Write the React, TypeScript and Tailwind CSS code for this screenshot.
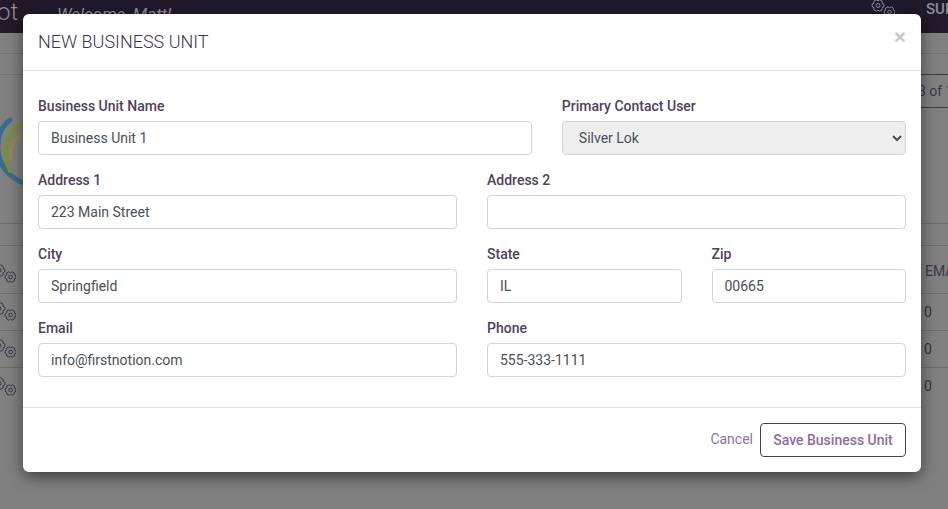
import React from "react";

function cog(cx: number, cy: number, rOuter: number, rInner: number) {
  const pts: string[] = [];
  const teeth = 6;
  for (let i = 0; i < teeth; i++) {
    const a = (i / teeth) * Math.PI * 2;
    const step = (Math.PI * 2) / teeth;
    const list: [number, number][] = [
      [rInner, a - step * 0.5],
      [rOuter, a - step * 0.22],
      [rOuter, a + step * 0.22],
    ];
    for (const [r, t] of list) pts.push(`${(cx + r * Math.cos(t)).toFixed(2)},${(cy + r * Math.sin(t)).toFixed(2)}`);
  }
  return pts.join(" ");
}

const Gears = ({ className = "" }: { className?: string }) => (
  <svg viewBox="0 0 24 20" width="24" height="20" fill="none" stroke="currentColor" strokeWidth="1" strokeLinejoin="round" className={className}>
    <polygon points={cog(7, 6.5, 6, 4.6)} />
    <circle cx="7" cy="6.5" r="2" />
    <polygon points={cog(18.5, 13, 5.5, 4.3)} />
    <circle cx="18.5" cy="13" r="1.8" />
  </svg>
);

const labelCls = "block h-[18px] mb-[6px] text-[14px] leading-[18px] font-medium text-[#4f4160]";

const Field = ({ label, value, className }: { label: string; value: string; className: string }) => (
  <div className={className}>
    <label className={labelCls}>{label}</label>
    <input
      readOnly
      value={value}
      className="block w-full h-[34px] px-3 rounded border border-[#ced4da] bg-white text-[14px] text-[#495057] outline-none"
    />
  </div>
);

export default function App() {
  return (
    <div className="relative w-[948px] h-[509px] overflow-hidden bg-[#808080] font-['Roboto',sans-serif]">
      {/* page behind the dialog */}
      <div className="h-[54px] border-b border-[#727272]">
        <div className="h-[33px] bg-[#201a2b] flex items-start text-[#8f8b95] overflow-hidden">
          <span className="w-[60px] text-[24px] leading-[24px] font-light -ml-[3px] shrink-0">ot</span>
          <span className="text-[17px] leading-[22px] italic mt-[3px]">Welcome, Matt!</span>
          <Gears className="ml-auto -mt-[1px] text-[#8f8b95]" />
          <span className="ml-[31px] w-[22px] shrink-0 text-[15px] leading-[18px] font-medium whitespace-nowrap overflow-hidden">SUPPORT</span>
        </div>
      </div>
      <div className="h-[20px]" />
      <div className="h-[34px] flex">
        <div className="flex-1 border-t border-[#727272]" />
        <div className="w-[60px] border-y border-[#3f3a44] flex items-center overflow-hidden">
          <span className="ml-[30px] text-[14px] text-[#41364c] whitespace-nowrap">3 of 1</span>
        </div>
      </div>
      <div className="h-[116px] pt-[8px] border-b border-[#6e6e6e]">
        <svg width="23" height="78" viewBox="0 0 23 78" fill="none" strokeLinecap="round">
          <path d="M10 4C-8 16-8 56 24 67" stroke="#3c6c8c" strokeWidth="5" />
          <path d="M24 7C6 13 1 36 10 55" stroke="#7a8d38" strokeWidth="4" />
          <path d="M24 18C15 21 10 30 11 42" stroke="#9a8b36" strokeWidth="2.500" />
        </svg>
      </div>
      <div className="h-[22px] border-b border-[#6e6e6e]" />
      <div className="h-[48px] border-b border-[#6e6e6e] flex items-center justify-between">
        <Gears className="-ml-[8px] mt-[9px] text-[#3d3546]" />
        <span className="w-[23px] mt-[4px] text-[14px] text-[#41364c] overflow-hidden whitespace-nowrap">EMAIL</span>
      </div>
      {[0, 1, 2].map((i) => (
        <div key={i} className={`h-[37px] flex items-center justify-between ${i < 2 ? "border-b border-[#6e6e6e]" : ""}`}>
          <Gears className="-ml-[8px] text-[#3d3546]" />
          <span className="w-[24px] text-[14px] text-[#333]">0</span>
        </div>
      ))}

      {/* dialog */}
      <div className="absolute left-[23px] top-[14px] w-[898px] h-[458px] flex flex-col rounded-md bg-white shadow-[0_5px_15px_rgba(0,0,0,0.5)]">
        <div className="h-[57px] shrink-0 flex items-start justify-between px-[15px] border-b border-[#e4e4e4]">
          <h5 className="mt-4 text-[18px] leading-[24px] font-light text-[#3f3350]">NEW BUSINESS UNIT</h5>
          <span className="mt-[9px] text-[21px] leading-[28px] font-bold text-[#c9c9c9] font-['Liberation_Sans',sans-serif]">×</span>
        </div>
        <div className="flex-1 px-[15px] pt-[26px] grid grid-cols-12 gap-x-[30px] gap-y-[16px] content-start">
          <Field className="col-span-7" label="Business Unit Name" value="Business Unit 1" />
          <div className="col-span-5">
            <label className={labelCls}>Primary Contact User</label>
            <select
              defaultValue="Silver Lok"
              className="block w-full h-[34px] pl-3 pr-1 rounded border border-[#ced4da] bg-[#eeeeee] text-[14px] text-[#495057] outline-none"
            >
              <option>Silver Lok</option>
            </select>
          </div>
          <Field className="col-span-6" label="Address 1" value="223 Main Street" />
          <Field className="col-span-6" label="Address 2" value="" />
          <Field className="col-span-6" label="City" value="Springfield" />
          <Field className="col-span-3" label="State" value="IL" />
          <Field className="col-span-3" label="Zip" value="00665" />
          <Field className="col-span-6" label="Email" value="info@firstnotion.com" />
          <Field className="col-span-6" label="Phone" value="555-333-1111" />
        </div>
        <div className="h-[65px] shrink-0 border-t border-[#e4e4e4] flex items-center justify-end gap-[7px] pr-[15px]">
          <span className="text-[14px] text-[#9070a6] -mt-[2px]">Cancel</span>
          <button className="h-[34px] w-[146px] rounded border border-[#4a3b5c] bg-white text-[14px] font-medium text-[#8f6ba5]">
            Save Business Unit
          </button>
        </div>
      </div>
    </div>
  );
}
